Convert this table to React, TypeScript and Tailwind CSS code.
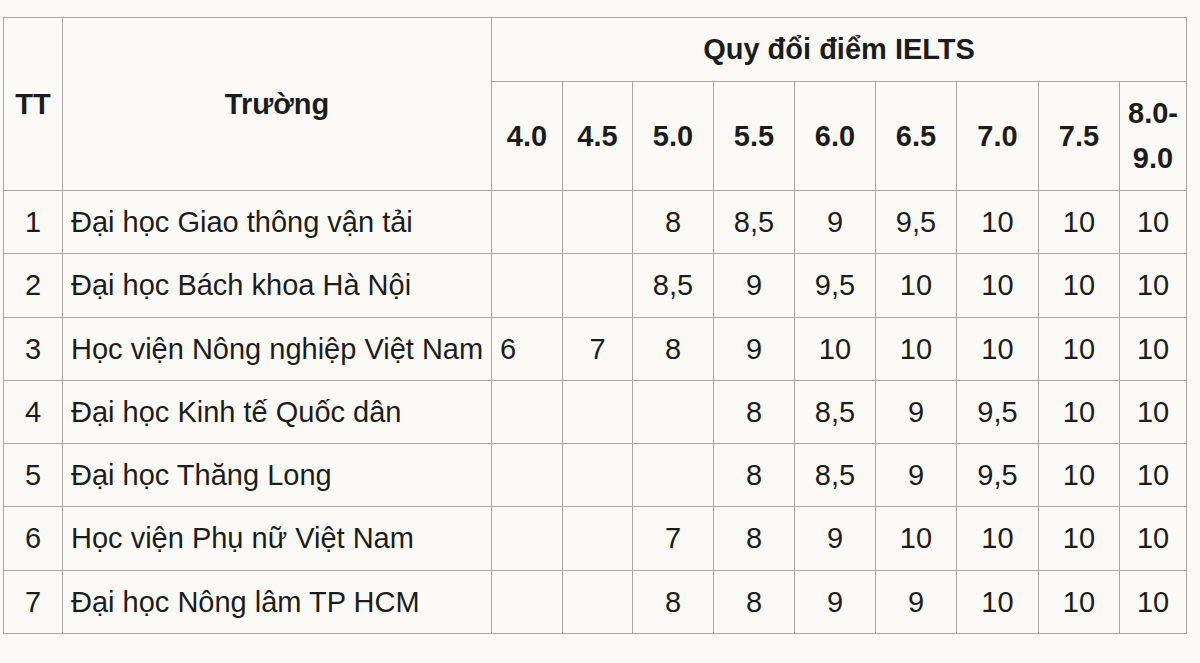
const rows: { tt: number; name: string; scores: string[] }[] = [
  { tt: 1, name: "Đại học Giao thông vận tải", scores: ["", "", "8", "8,5", "9", "9,5", "10", "10", "10"] },
  { tt: 2, name: "Đại học Bách khoa Hà Nội", scores: ["", "", "8,5", "9", "9,5", "10", "10", "10", "10"] },
  { tt: 3, name: "Học viện Nông nghiệp Việt Nam", scores: ["6", "7", "8", "9", "10", "10", "10", "10", "10"] },
  { tt: 4, name: "Đại học Kinh tế Quốc dân", scores: ["", "", "", "8", "8,5", "9", "9,5", "10", "10"] },
  { tt: 5, name: "Đại học Thăng Long", scores: ["", "", "", "8", "8,5", "9", "9,5", "10", "10"] },
  { tt: 6, name: "Học viện Phụ nữ Việt Nam", scores: ["", "", "7", "8", "9", "10", "10", "10", "10"] },
  { tt: 7, name: "Đại học Nông lâm TP HCM", scores: ["", "", "8", "8", "9", "9", "10", "10", "10"] },
];

const bands = ["4.0", "4.5", "5.0", "5.5", "6.0", "6.5", "7.0", "7.5"];
const colWidths = [71, 70, 81, 81, 81, 81, 82, 81, 67];

const head = "border border-[#a7a7a5] px-[8px] py-[9px] leading-[45px] text-center font-bold";
const cell = "border border-[#a7a7a5] px-[8px] py-[9px] leading-[44.3px]";

export default function App() {
  return (
    <div
      className="min-h-[663px] w-[1200px] bg-[#fbfaf7] pl-[3px] pt-[17px] text-[29px] text-[#1c1c1c]"
      style={{ fontFamily: '"Liberation Sans", Arial, sans-serif' }}
    >
      <table className="w-[1183px] table-fixed border-collapse">
        <colgroup>
          <col className="w-[59px]" />
          <col className="w-[429px]" />
          {colWidths.map((w, i) => (
            <col key={i} style={{ width: w }} />
          ))}
        </colgroup>
        <thead>
          <tr>
            <th rowSpan={2} className={head}>
              TT
            </th>
            <th rowSpan={2} className={head}>
              Trường
            </th>
            <th colSpan={9} className={head}>
              Quy đổi điểm IELTS
            </th>
          </tr>
          <tr>
            {bands.map((b) => (
              <th key={b} className={head}>
                {b}
              </th>
            ))}
            <th className={head}>
              8.0-
              <br />
              9.0
            </th>
          </tr>
        </thead>
        <tbody>
          {rows.map((r) => (
            <tr key={r.tt}>
              <td className={`${cell} text-center`}>{r.tt}</td>
              <td className={`${cell} whitespace-nowrap text-left`}>{r.name}</td>
              {r.scores.map((s, i) => (
                <td key={i} className={`${cell} ${i === 0 ? "text-left" : "text-center"}`}>
                  {s}
                </td>
              ))}
            </tr>
          ))}
        </tbody>
      </table>
    </div>
  );
}
